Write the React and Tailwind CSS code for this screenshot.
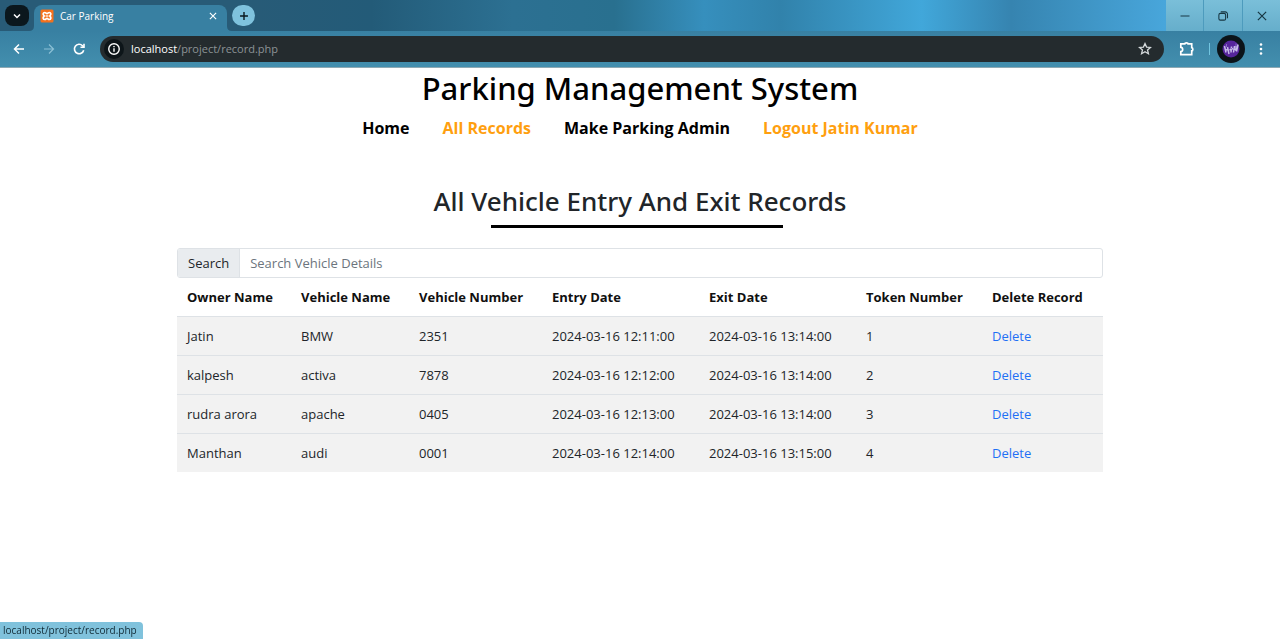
import React from "react";

const records = [
  ["Jatin", "BMW", "2351", "2024-03-16 12:11:00", "2024-03-16 13:14:00", "1"],
  ["kalpesh", "activa", "7878", "2024-03-16 12:12:00", "2024-03-16 13:14:00", "2"],
  ["rudra arora", "apache", "0405", "2024-03-16 12:13:00", "2024-03-16 13:14:00", "3"],
  ["Manthan", "audi", "0001", "2024-03-16 12:14:00", "2024-03-16 13:15:00", "4"],
];

const headings = [
  { text: "Owner Name", width: "w-[114px]" },
  { text: "Vehicle Name", width: "w-[118px]" },
  { text: "Vehicle Number", width: "w-[133px]" },
  { text: "Entry Date", width: "w-[157px]" },
  { text: "Exit Date", width: "w-[157px]" },
  { text: "Token Number", width: "w-[126px]" },
  { text: "Delete Record", width: "w-[121px]" },
];

function Icon({ size = "size-4", width = 1.5, children }) {
  return (
    <svg viewBox="0 0 16 16" className={size} fill="none" stroke="currentColor" strokeWidth={width} aria-hidden="true">
      {children}
    </svg>
  );
}

function Favicon() {
  return (
    <svg viewBox="0 0 14 14" className="size-[14px] shrink-0" aria-hidden="true">
      <rect x="0.5" y="0.5" width="13" height="13" rx="1.5" fill="#f4711d" />
      <path
        d="M4.700 3.500C3 3.500 2.600 5.800 4 6.500v1C2.600 8.200 3 10.500 4.700 10.500 6 10.500 6.200 9.400 7 9.400s1 1.100 2.300 1.100c1.700 0 2.100-2.300.7-3v-1c1.400-.7 1-3-.7-3C8 3.500 7.800 4.600 7 4.600S6 3.500 4.700 3.500Z"
        fill="none"
        stroke="#fff"
        strokeWidth="1.700"
      />
      <path d="M5.500 7h3" stroke="#fff" strokeWidth="1.300" />
    </svg>
  );
}

function Avatar() {
  return (
    <svg viewBox="0 0 28 28" className="size-7" aria-hidden="true">
      <circle cx="14" cy="14" r="14" fill="#0b1319" />
      <circle cx="14" cy="14" r="8.500" fill="#56259c" />
      <path
        d="M7.500 11l1.500 6.500M10.500 12l1.500 7M8.500 15l3-.5M17.500 11l-1 6.500M21 9.500l-1.500 7M17 14.500l3.500-1M14.500 11.500l-.5 6M12.500 15l3.500-1.500M19 11v5"
        stroke="#c6bae9"
        strokeWidth="1.500"
        fill="none"
      />
      <path d="M9.500 9v3M19 8.500v4M13 13.500h2" stroke="#8a6cc4" strokeWidth="1" fill="none" />
    </svg>
  );
}

function TabStrip() {
  return (
    <div className="flex h-[31px] items-stretch bg-[linear-gradient(90deg,#285b77_0%,#285b77_18%,#235b78_29%,#2c7092_40%,#29708f_48%,#368fbd_55%,#3182ab_61%,#41a7da_72%,#3684b0_79%,#48a6db_91%)]">
      <div className="flex flex-1 items-start pl-[5px] pt-[5px]">
        <button aria-label="Search tabs" className="flex h-[21px] w-6 items-center justify-center rounded-lg bg-[#0b171d] text-white">
          <Icon size="size-3" width={2}><path d="m4 6 4 4 4-4" /></Icon>
        </button>
        <svg viewBox="0 0 6 6" className="size-[5px] self-end" aria-hidden="true">
          <path d="M6 0v6H0c4 0 6-2 6-6Z" fill="#3880a2" />
        </svg>
        <div className="flex h-[26px] w-[193px] items-center gap-[6px] rounded-t-lg bg-[#3880a2] px-[6px] pb-1">
          <Favicon />
          <span className="flex-1 text-[10px] leading-4 text-white">Car Parking</span>
          <button aria-label="Close tab" className="flex size-4 items-center justify-center text-white">
            <Icon size="size-[10px]" width={1.8}><path d="m3 3 10 10M13 3 3 13" /></Icon>
          </button>
        </div>
        <svg viewBox="0 0 6 6" className="size-[5px] self-end" aria-hidden="true">
          <path d="M0 0v6h6C2 6 0 4 0 0Z" fill="#3880a2" />
        </svg>
        <button aria-label="New tab" className="flex h-[21px] w-[23px] items-center justify-center rounded-full bg-[#7fc2dd] text-[#0b171d]">
          <Icon size="size-[14px]" width={1.6}><path d="M8 3.500v9M3.500 8h9" /></Icon>
        </button>
      </div>
      <div className="flex gap-px bg-[#4d9bbd] text-[#173642]">
        <button aria-label="Minimize" className="flex w-[37px] items-center justify-center bg-linear-to-b from-[#7abfd9] to-[#66aecb]">
          <Icon size="size-3" width={1.3}><path d="M2 8h12" /></Icon>
        </button>
        <button aria-label="Restore" className="flex w-[38px] items-center justify-center bg-linear-to-b from-[#7abfd9] to-[#66aecb]">
          <Icon size="size-3" width={1.4}>
            <rect x="2.500" y="4.500" width="9" height="9" rx="2" />
            <path d="M5 2.500h6a3 3 0 0 1 3 3V11" />
          </Icon>
        </button>
        <button aria-label="Close" className="flex w-[37px] items-center justify-center bg-linear-to-b from-[#7abfd9] to-[#66aecb]">
          <Icon size="size-3" width={1.6}><path d="m2.500 2.500 11 11M13.500 2.500l-11 11" /></Icon>
        </button>
      </div>
    </div>
  );
}

function Toolbar() {
  return (
    <div className="flex h-[37px] items-center border-b border-[#8ea9b3] bg-linear-to-b from-[#3880a2] to-[#438fae] px-[11px] text-white">
      <div className="flex gap-[14px]">
        <button aria-label="Back"><Icon size="size-4" width={1.500}><path d="M13 8H3.500M8 3.500 3.500 8 8 12.500" /></Icon></button>
        <button aria-label="Forward" className="text-[#8cc0d5]"><Icon size="size-4" width={1.200}><path d="M3 8h9.500M8 3.500 12.500 8 8 12.500" /></Icon></button>
        <button aria-label="Reload">
          <Icon size="size-4" width={1.6}>
            <path d="M12.700 9.200A4.700 4.700 0 1 1 11.500 4.700L12.700 6" />
            <path d="M13 2.800v3.400H9.500" />
          </Icon>
        </button>
      </div>
      <div className="ml-[13px] flex h-[26px] flex-1 items-center rounded-full bg-[#242b2e] pl-1 pr-3">
        <button aria-label="View site information" className="flex size-5 items-center justify-center rounded-full bg-[#0d1519]">
          <Icon size="size-[14px]" width={1.6}>
            <circle cx="8" cy="8" r="6" />
            <path d="M8 7.200v4M8 4.500v1.600" />
          </Icon>
        </button>
        <a href="#url" className="ml-[7px] flex-1 text-[11px] leading-4 text-[#8c9396]">
          <span className="text-white">localhost</span>/project/record.php
        </a>
        <button aria-label="Bookmark this page" className="text-[#d5dadc]">
          <Icon size="size-[14px]" width={1.500}>
            <path d="m8 1.800 1.800 4 4.400.4-3.300 2.900 1 4.300L8 11.100l-3.900 2.300 1-4.300-3.300-2.900 4.400-.4Z" />
          </Icon>
        </button>
      </div>
      <button aria-label="Extensions" className="ml-[14px]">
        <Icon size="size-[18px]" width={1.500}>
          <path d="M2.500 3.500H6a1.500 1 0 0 1 3 0h3.200v3.200a1 1.500 0 0 1 0 3V13H2.500v-2.700c2.200-.2 2.200-3.600 0-3.800Z" />
        </Icon>
      </button>
      <span className="ml-[13px] h-3 w-px bg-[#72c5e0]" />
      <button aria-label="Profile" className="ml-[7px]"><Avatar /></button>
      <button aria-label="Browser menu" className="ml-2">
        <svg viewBox="0 0 16 16" className="size-4" fill="currentColor" aria-hidden="true">
          <circle cx="8" cy="3.500" r="1.300" /><circle cx="8" cy="8" r="1.300" /><circle cx="8" cy="12.500" r="1.300" />
        </svg>
      </button>
    </div>
  );
}

export default function App() {
  return (
    <div className="flex min-h-screen flex-col bg-white font-['Open_Sans','Noto_Sans',sans-serif] text-[#212529]">
      <header>
        <TabStrip />
        <Toolbar />
      </header>

      <main className="flex flex-1 flex-col items-center px-4">
        <h1 className="font-['Noto_Sans',sans-serif] text-[31px] font-medium leading-10 text-black">Parking Management System</h1>
        <nav className="mt-2 flex flex-wrap justify-center gap-x-[33px] text-base font-bold leading-6 text-black">
          <a href="#home">Home</a>
          <a href="#records" className="text-[#ff9f0f]">All Records</a>
          <a href="#admin">Make Parking Admin</a>
          <a href="#logout" className="text-[#ff9f0f]">Logout Jatin Kumar</a>
        </nav>
        <h2 className="mt-[45px] font-['Noto_Sans',sans-serif] text-[26px] font-medium leading-8">All Vehicle Entry And Exit Records</h2>
        <div className="mr-[6px] mt-2 h-[3px] w-[292px] bg-black" />

        <section className="mt-5 w-full max-w-[926px] text-[13px] leading-5">
          <div className="flex h-[30px] overflow-hidden rounded-[3px] border border-[#dee2e6]">
            <label htmlFor="search" className="flex items-center border-r border-[#dee2e6] bg-[#e9ecef] px-[10px]">Search</label>
            <input
              id="search"
              type="text"
              placeholder="Search Vehicle Details"
              className="min-w-0 flex-1 px-[10px] outline-none placeholder:text-[#6c757d]"
            />
          </div>
          <table className="w-full border-collapse text-left">
            <thead>
              <tr className="h-[38px] border-b border-[#dee2e6] text-[#101010]">
                {headings.map(({ text, width }) => (
                  <th key={text} className={`${width} px-[10px] font-bold`}>{text}</th>
                ))}
              </tr>
            </thead>
            <tbody>
              {records.map((record) => (
                <tr key={record[5]} className="h-[39px] border-b border-[#dee2e6] bg-[#f2f2f2] last:border-b-0">
                  {record.map((value, i) => (
                    <td key={i} className="px-[10px]">{value}</td>
                  ))}
                  <td className="px-[10px]"><a href="#delete" className="text-[#1f70f5]">Delete</a></td>
                </tr>
              ))}
            </tbody>
          </table>
        </section>
      </main>

      <div role="status" className="fixed bottom-0 left-0 rounded-tr-sm bg-[#80c2dc] pl-[3px] pr-[6px] text-[10px] leading-[17px] text-[#102a35]">
        localhost/project/record.php
      </div>
    </div>
  );
}
